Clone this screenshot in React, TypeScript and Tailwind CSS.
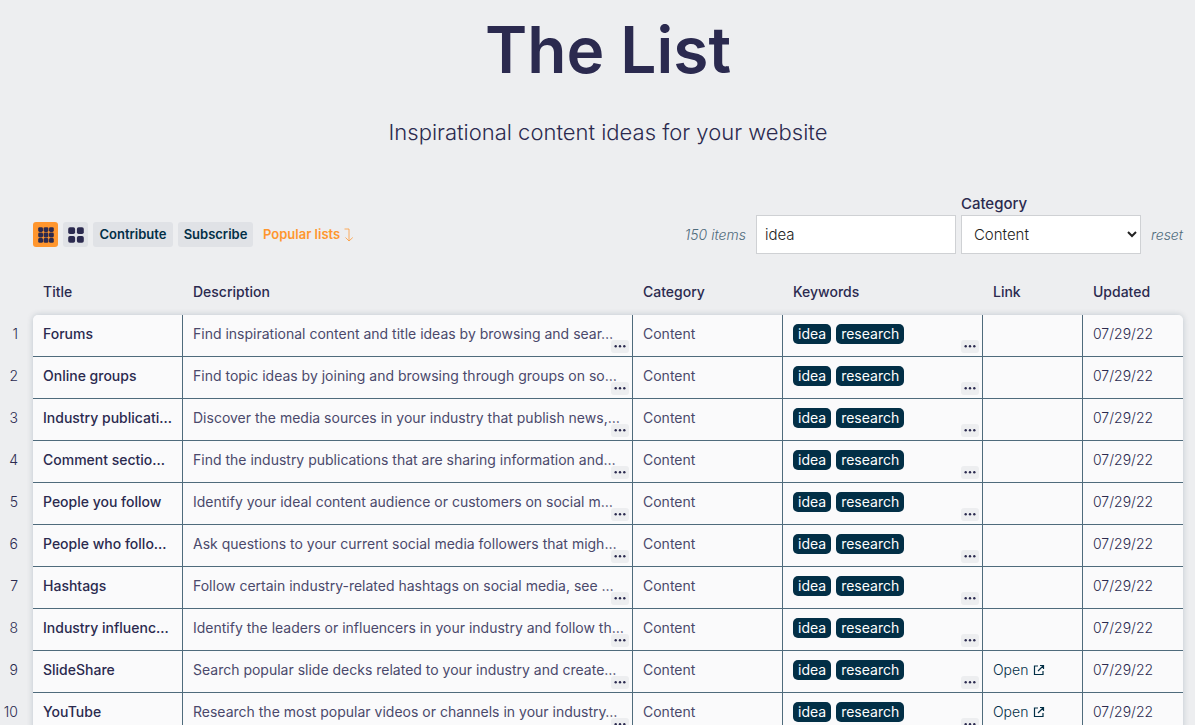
const INK = "text-[#2b2a4f]";

const ITEMS = [
  { title: "Forums", description: "Find inspirational content and title ideas by browsing and sear…" },
  { title: "Online groups", description: "Find topic ideas by joining and browsing through groups on so…" },
  { title: "Industry publicati…", description: "Discover the media sources in your industry that publish news,…" },
  { title: "Comment sectio…", description: "Find the industry publications that are sharing information and…" },
  { title: "People you follow", description: "Identify your ideal content audience or customers on social m…" },
  { title: "People who follo…", description: "Ask questions to your current social media followers that migh…" },
  { title: "Hashtags", description: "Follow certain industry-related hashtags on social media, see …" },
  { title: "Industry influenc…", description: "Identify the leaders or influencers in your industry and follow th…" },
  { title: "SlideShare", description: "Search popular slide decks related to your industry and create…", link: "#slideshare" },
  { title: "YouTube", description: "Research the most popular videos or channels in your industry…", link: "#youtube" },
];

const KEYWORDS = ["idea", "research"];

const COLUMNS = [
  { label: "Title", width: "w-[150px]" },
  { label: "Description", width: "" },
  { label: "Category", width: "w-[150px]" },
  { label: "Keywords", width: "w-[200px]" },
  { label: "Link", width: "w-[100px]" },
  { label: "Updated", width: "w-[100px]" },
];

const CELL = "relative bg-[#fafafb] px-2.5 pb-[3px] border-b border-[#4f6b7c] whitespace-nowrap not-last:border-r";

function GridIcon({ count }: { count: 2 | 3 }) {
  const size = count === 3 ? 4.8 : 6.9;
  const step = count === 3 ? 5.4 : 8.7;
  const cells = Array.from({ length: count * count }, (_, i) => i);
  return (
    <svg width="16" height="16" viewBox="0 0 16 16" fill="#2b2a4f" aria-hidden="true">
      {cells.map((i) => (
        <rect
          key={i}
          x={(i % count) * step + 0.2}
          y={Math.floor(i / count) * step + 0.2}
          width={size}
          height={size}
          rx={count === 3 ? 1.4 : 1.8}
        />
      ))}
    </svg>
  );
}

function ElbowDownIcon() {
  return (
    <svg width="10" height="14" viewBox="0 0 10 14" fill="none" stroke="currentColor" strokeOpacity="0.75" aria-hidden="true">
      <path d="M0.5 1h4.5v12M1.5 9.5L5 13l3.8-3.5" />
    </svg>
  );
}

function ExternalIcon() {
  return (
    <svg width="12" height="12" viewBox="0 0 12 12" fill="none" stroke="currentColor" strokeWidth="1.2" aria-hidden="true">
      <path d="M5 2H1.5v8.5H10V7M7 1.5h3.5V5M10.5 1.5L5 7" />
    </svg>
  );
}

function MoreButton({ label }: { label: string }) {
  return (
    <button
      aria-label={label}
      className="absolute right-[3px] bottom-[3px] flex h-[13px] w-[18px] items-center justify-center rounded-[3px] bg-[#edeef0]"
    >
      <svg width="12" height="3" viewBox="0 0 12 3" fill="#2b2a4f" aria-hidden="true">
        <circle cx="1.7" cy="1.2" r="1.2" />
        <circle cx="6" cy="1.2" r="1.2" />
        <circle cx="10.3" cy="1.2" r="1.2" />
      </svg>
    </button>
  );
}

function Toolbar() {
  return (
    <div className="flex items-end justify-between">
      <div className="flex h-[39px] items-center gap-[5px] text-[13px] font-semibold text-[#022f46]">
        <button aria-label="Table view" className="flex size-[25px] items-center justify-center rounded-[3px] bg-[#ff962e]">
          <GridIcon count={3} />
        </button>
        <button aria-label="Card view" className="flex size-[25px] items-center justify-center rounded-[3px] bg-[#e0e2e6]">
          <GridIcon count={2} />
        </button>
        <button className="h-[25px] w-20 rounded-[3px] bg-[#e0e2e6]">Contribute</button>
        <button className="h-[25px] w-[75px] rounded-[3px] bg-[#e0e2e6]">Subscribe</button>
        <button className="flex items-center gap-1 pl-[5px] text-[#ff962e]">
          Popular lists <ElbowDownIcon />
        </button>
      </div>

      <div className="flex items-end gap-[5px]">
        <span className="flex h-[39px] items-center pr-[5px] text-sm font-light italic text-[#4f6b7c]">150 items</span>
        <input
          type="text"
          aria-label="Search"
          defaultValue="idea"
          className="h-[39px] w-[200px] border border-[#cfd1d4] bg-white px-2 text-[15px] font-light text-[#222]"
        />
        <div className="flex flex-col">
          <label htmlFor="category" className="text-[15px] leading-[22px] font-medium">Category</label>
          <select
            id="category"
            className="h-[39px] w-[180px] border border-[#cfd1d4] bg-white px-2 text-[15px] font-light text-[#222]"
          >
            <option>Content</option>
          </select>
        </div>
        <button className="h-[39px] pl-[5px] text-sm font-light italic text-[#4f6b7c]">reset</button>
      </div>
    </div>
  );
}

export default function App() {
  return (
    <div className={`min-h-screen bg-[#edeef0] pr-3 font-['Inter',sans-serif] ${INK}`}>
      <header className="pl-[33px] text-center">
        <h1 className="pt-2.5 text-[64px] leading-20 font-semibold">The List</h1>
        <p className="pt-7 text-[22px] leading-7 font-light">Inspirational content ideas for your website</p>
      </header>

      <div className="pt-[47px] pl-[33px]">
        <Toolbar />
      </div>

      <div className="flex pt-4">
        {/* Row numbers */}
        <ol className="w-[33px] shrink-0 pt-[45px] pr-[15px] text-right text-sm font-light">
          {ITEMS.map((item, i) => (
            <li key={item.title} className="h-[42px] leading-[38px]">{i + 1}</li>
          ))}
        </ol>

        <div className="min-w-0 flex-1">
          <table className="w-full table-fixed border-separate border-spacing-0 text-left text-sm">
            <thead>
              <tr className="h-[45px]">
                {COLUMNS.map((c) => (
                  <th key={c.label} className={`px-2.5 pb-0.5 font-medium ${c.width}`}>{c.label}</th>
                ))}
              </tr>
            </thead>
            <tbody className="rounded-[5px] shadow-[0_0_6px_rgba(2,47,70,0.2)] [&>tr:first-child>td:first-child]:rounded-tl-[5px] [&>tr:first-child>td:last-child]:rounded-tr-[5px]">
              {ITEMS.map((item) => (
                <tr key={item.title} className="h-[42px]">
                  <td className={`${CELL} font-medium`}>{item.title}</td>
                  <td className={`${CELL} text-[#4a496b]`}>
                    {item.description}
                    <MoreButton label="More description" />
                  </td>
                  <td className={`${CELL} text-[#4a496b]`}>Content</td>
                  <td className={CELL}>
                    <div className="flex gap-[5px]">
                      {KEYWORDS.map((k) => (
                        <span key={k} className="rounded-[5px] bg-[#022f46] px-[5px] leading-5 text-white">{k}</span>
                      ))}
                    </div>
                    <MoreButton label="More keywords" />
                  </td>
                  <td className={CELL}>
                    {item.link && (
                      <a href={item.link} className="flex items-center gap-[5px] font-light text-[#022f46]">
                        Open <ExternalIcon />
                      </a>
                    )}
                  </td>
                  <td className={`${CELL} font-light`}>07/29/22</td>
                </tr>
              ))}
            </tbody>
          </table>
        </div>
      </div>
    </div>
  );
}
